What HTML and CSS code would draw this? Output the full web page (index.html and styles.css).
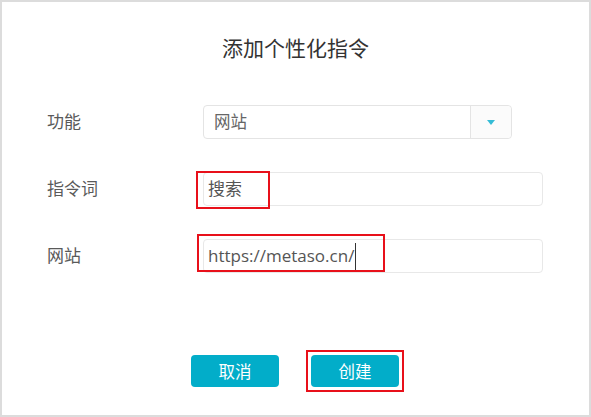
FILE: index.html
```html
<!DOCTYPE html>
<html lang="zh-CN">
<head>
<meta charset="utf-8">
<title>添加个性化指令</title>
<link rel="stylesheet" href="styles.css">
</head>
<body>
<div class="dialog">
  <h1 class="title">添加个性化指令</h1>
  <div class="form">
    <div class="label">功能</div>
    <div class="select">
      <span class="select-value">网站</span>
      <span class="select-btn"><span class="caret-down"></span></span>
    </div>

    <div class="label">指令词</div>
    <div class="input">
      <span class="input-text">搜索</span>
      <span class="mark mark-keyword"></span>
    </div>

    <div class="label">网站</div>
    <div class="input">
      <span class="input-text">https://metaso.cn/</span><span class="text-cursor"></span>
      <span class="mark mark-url"></span>
    </div>
  </div>
  <div class="actions">
    <button class="btn">取消</button>
    <button class="btn btn-create">创建<span class="mark mark-create"></span></button>
  </div>
</div>
</body>
</html>
```

FILE: styles.css
```css
html, body {
  margin: 0;
  padding: 0;
  background: #ffffff;
}

body {
  font-family: "Open Sans", "Noto Sans CJK SC", sans-serif;
}

.dialog {
  width: 591px;
  height: 417px;
  box-sizing: border-box;
  border: 2px solid #dcdcdc;
  background: #ffffff;
  overflow: hidden;
}

.title {
  margin: 32px 0 0 0;
  font-size: 21px;
  line-height: 28px;
  font-weight: normal;
  color: #333333;
  text-align: center;
}

.form {
  margin-top: 43px;
  padding-left: 45px;
  display: grid;
  grid-template-columns: 156px auto;
  grid-auto-rows: 34px;
  row-gap: 33px;
  align-items: center;
}

.label {
  font-size: 17px;
  color: #5a5a5a;
  line-height: 34px;
}

.select {
  width: 309px;
  height: 34px;
  box-sizing: border-box;
  border: 1px solid #e4e4e4;
  border-radius: 4px;
  display: flex;
  align-items: stretch;
}

.select-value {
  flex: 1;
  padding-left: 10px;
  font-size: 16.5px;
  line-height: 32px;
  color: #666666;
}

.select-btn {
  width: 40px;
  border-left: 1px solid #e4e4e4;
  background: #fbfbfb;
  border-radius: 0 4px 4px 0;
  display: flex;
  align-items: center;
  justify-content: center;
}

.caret-down {
  width: 0;
  height: 0;
  border-left: 4px solid transparent;
  border-right: 4px solid transparent;
  border-top: 5px solid #35bcd6;
  margin-top: 1px;
}

.input {
  position: relative;
  width: 340px;
  height: 34px;
  box-sizing: border-box;
  border: 1px solid #e8e8e8;
  border-radius: 4px;
  display: flex;
  align-items: center;
  padding-left: 4px;
}

.input-text {
  font-size: 17px;
  color: #555555;
  line-height: 32px;
}

.text-cursor {
  display: inline-block;
  width: 0;
  height: 27px;
  border-left: 1.5px solid #333333;
  margin-left: 1px;
}

.mark {
  position: absolute;
  box-sizing: border-box;
  border: 2px solid #e8101a;
  pointer-events: none;
}

.mark-keyword {
  left: -8px;
  top: -2px;
  width: 74px;
  height: 38px;
}

.mark-url {
  left: -7px;
  top: -6px;
  width: 188px;
  height: 38px;
}

.actions {
  margin-top: 82px;
  display: flex;
  justify-content: center;
  gap: 32px;
  padding-right: 1px;
}

.btn {
  position: relative;
  width: 88px;
  height: 32px;
  border: none;
  border-radius: 4px;
  background: #02adc9;
  color: #ffffff;
  font-family: "Open Sans", "Noto Sans CJK SC", sans-serif;
  font-size: 16.5px;
  padding: 0;
}

.mark-create {
  left: -5px;
  top: -5px;
  width: 98px;
  height: 42px;
}
```
